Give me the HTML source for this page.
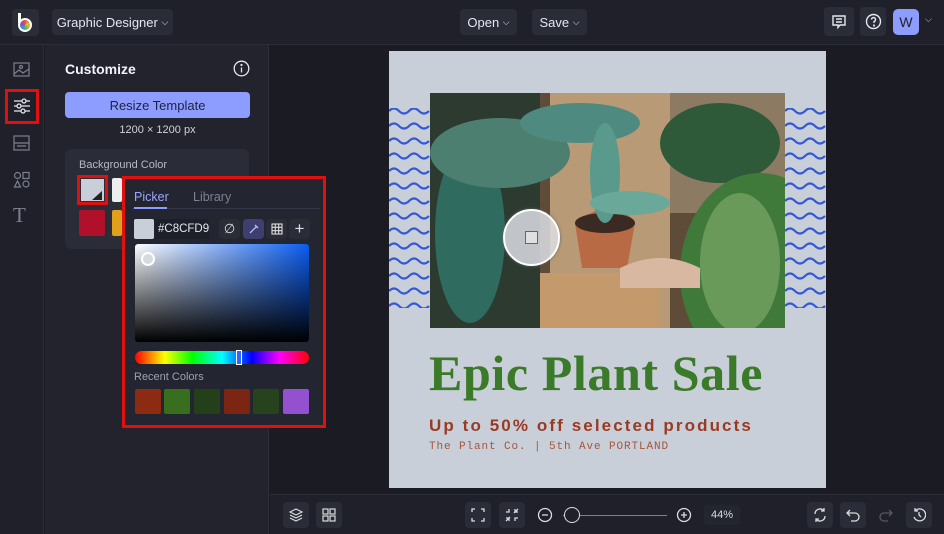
<!DOCTYPE html>
<html><head><meta charset="utf-8"><style>
*{box-sizing:border-box;margin:0;padding:0}
body{width:944px;height:534px;overflow:hidden;background:#1b1c23;font-family:"Liberation Sans",sans-serif;color:#e6e7ee;position:relative}
.abs{position:absolute}
.btn{position:absolute;background:#2a2c37;border-radius:4px;color:#e6e7ee;font-size:13px;display:flex;align-items:center;justify-content:center}
.ib{position:absolute;background:#2a2c37;border-radius:4px;width:26px;height:26px;display:flex;align-items:center;justify-content:center}
</style></head><body>
<div class="abs" style="left:0;top:0;width:944px;height:45px;background:#1f2029;border-bottom:1px solid #2b2d38"></div>
<div class="abs" style="top:9px;left:12px;width:27px;height:27px;background:#2a2c37;border-radius:4px"></div>
<div class="abs" style="left:18px;top:13px;width:3px;height:10px;background:#fff"></div>
<div class="abs" style="left:18px;top:18px;width:14px;height:14px;border-radius:50%;background:conic-gradient(#e94b3c,#f5b82e,#7ac143,#2f9ad8,#8e4fc4,#e94b3c);border:2px solid #fff"></div>
<div class="btn" style="left:52px;top:9px;width:121px;height:26px">Graphic Designer&nbsp; <span style="font-size:9px">⌵</span></div>
<div class="btn" style="left:460px;top:9px;width:57px;height:26px">Open&nbsp; <span style="font-size:9px">⌵</span></div>
<div class="btn" style="left:532px;top:9px;width:55px;height:26px">Save&nbsp; <span style="font-size:9px">⌵</span></div>
<div class="ib" style="left:824px;top:7px;width:30px;height:29px"><svg width="16" height="16" viewBox="0 0 16 16" fill="none" stroke="#e6e7ee" stroke-width="1.4"><path d="M2 2h12v9H9l-2 2.5V11H2z"/><path d="M5 5h6M5 8h6"/></svg></div>
<div class="ib" style="left:860px;top:7px;width:26px;height:29px"><svg width="17" height="17" viewBox="0 0 17 17" fill="none" stroke="#e6e7ee" stroke-width="1.4"><circle cx="8.5" cy="8.5" r="7"/><path d="M6.5 6.5a2 2 0 1 1 2.5 2v1.5"/><circle cx="9" cy="12.5" r=".4"/></svg></div>
<div class="abs" style="left:893px;top:9px;width:26px;height:26px;background:#8c9cff;border-radius:5px;color:#1f2029;font-size:14px;display:flex;align-items:center;justify-content:center">W</div>
<div class="abs" style="left:925px;top:14px;font-size:9px;color:#ccc">⌵</div>
<div class="abs" style="left:0;top:45px;width:44px;height:489px;background:#1f2029;border-right:1px solid #2b2d38"></div>
<svg class="abs" style="left:13px;top:62px" width="18" height="16" fill="none" stroke="#7d8090" stroke-width="1.2"><rect x="1" y="1" width="15" height="13"/><path d="M1 12l5-4 4 3 6-4"/><circle cx="8" cy="5" r="1.5"/></svg>
<div class="abs" style="left:5px;top:89px;width:34px;height:35px;border:3px solid #e01010"></div>
<svg class="abs" style="left:13px;top:97px" width="18" height="18" fill="none" stroke="#e6e7ee" stroke-width="1.3"><path d="M1 4h16M1 9h16M1 14h16"/><circle cx="11" cy="4" r="2" fill="#1f2029"/><circle cx="6" cy="9" r="2" fill="#1f2029"/><circle cx="10" cy="14" r="2" fill="#1f2029"/></svg>
<svg class="abs" style="left:13px;top:135px" width="18" height="16" fill="none" stroke="#7d8090" stroke-width="1.2"><rect x="1" y="1" width="15" height="14"/><path d="M1 8h15M4 11h9"/></svg>
<svg class="abs" style="left:13px;top:171px" width="18" height="18" fill="none" stroke="#7d8090" stroke-width="1.2"><circle cx="4.5" cy="4.5" r="3"/><rect x="10" y="1.5" width="6" height="6"/><path d="M4.5 10l3 6h-6z"/><circle cx="13" cy="13" r="3"/></svg>
<div class="abs" style="left:13px;top:203px;font-family:'Liberation Serif',serif;font-size:21px;color:#7d8090">T</div>
<div class="abs" style="left:45px;top:45px;width:224px;height:489px;background:#22232c;border-right:1px solid #2b2d38"></div>
<div class="abs" style="left:65px;top:61px;font-size:14px;font-weight:bold;color:#f2f3f8">Customize</div>
<svg class="abs" style="left:233px;top:60px" width="17" height="17" fill="none" stroke="#e6e7ee" stroke-width="1.3"><circle cx="8.5" cy="8.5" r="7.3"/><path d="M8.5 7.5v5"/><circle cx="8.5" cy="5" r=".5"/></svg>
<div class="abs" style="left:65px;top:92px;width:185px;height:26px;background:#8c9cff;border-radius:4px;color:#1f2240;font-size:13px;display:flex;align-items:center;justify-content:center">Resize Template</div>
<div class="abs" style="left:65px;top:124px;width:185px;text-align:center;font-size:11px;color:#d0d2dc">1200 × 1200 px</div>
<div class="abs" style="left:65px;top:149px;width:184px;height:100px;background:#2a2c37;border-radius:6px"></div>
<div class="abs" style="left:79px;top:159px;font-size:11px;color:#b8bac6">Background Color</div>
<div class="abs" style="left:77px;top:175px;width:31px;height:30px;border:3px solid #e01010"></div>
<div class="abs" style="left:81px;top:179px;width:23px;height:22px;background:#c8cfd9"></div>
<div class="abs" style="left:92px;top:191px;width:0;height:0;border-left:10px solid transparent;border-bottom:9px solid #222"></div>
<div class="abs" style="left:112px;top:178px;width:10px;height:24px;background:#eee;border-radius:2px"></div>
<div class="abs" style="left:79px;top:210px;width:26px;height:26px;background:#b0102a;border-radius:2px"></div>
<div class="abs" style="left:112px;top:210px;width:10px;height:26px;background:#e0a01a;border-radius:2px"></div>
<div class="abs" style="left:122px;top:176px;width:204px;height:252px;background:#232530;border:3px solid #e01010"></div>
<div class="abs" style="left:134px;top:190px;font-size:12.5px;color:#9ba6ff">Picker</div>
<div class="abs" style="left:193px;top:190px;font-size:12.5px;color:#7d8090">Library</div>
<div class="abs" style="left:132px;top:208px;width:188px;height:1px;background:#34364a"></div>
<div class="abs" style="left:134px;top:207px;width:33px;height:2px;background:#8c9cff"></div>
<div class="abs" style="left:134px;top:219px;width:20px;height:20px;background:#c8cfd9;border-radius:2px"></div>
<div class="abs" style="left:155px;top:219px;width:54px;height:20px;background:#1e2029;font-size:11.5px;color:#e6e7ee;line-height:20px;padding-left:3px">#C8CFD9</div>
<div class="ib" style="left:219px;top:219px;width:21px;height:20px;font-size:13px;color:#ddd">∅</div>
<div class="ib" style="left:243px;top:219px;width:21px;height:20px;background:#3e3f6e"><svg width="12" height="12" fill="none" stroke="#b8c0ff" stroke-width="1.3"><path d="M2 10l6-6M7 2l3 3"/></svg></div>
<div class="ib" style="left:266px;top:219px;width:21px;height:20px"><svg width="12" height="12" fill="none" stroke="#ddd" stroke-width="1.1"><rect x="1" y="1" width="10" height="10"/><path d="M4.3 1v10M7.7 1v10M1 4.3h10M1 7.7h10"/></svg></div>
<div class="ib" style="left:289px;top:219px;width:21px;height:20px;font-size:17px;color:#ddd">+</div>
<div class="abs" style="left:135px;top:244px;width:174px;height:98px;border-radius:3px;background:linear-gradient(to bottom,rgba(0,0,0,0),#000),linear-gradient(to right,#fff,#0a5df0)"></div>
<div class="abs" style="left:141px;top:252px;width:14px;height:14px;border-radius:50%;border:2px solid #fff;background:#d6dbe2"></div>
<div class="abs" style="left:135px;top:351px;width:174px;height:13px;border-radius:7px;background:linear-gradient(to right,#f00,#ff0 17%,#0f0 33%,#0ff 50%,#00f 67%,#f0f 83%,#f00)"></div>
<div class="abs" style="left:236px;top:350px;width:6px;height:15px;border:1.5px solid #fff;background:#36f"></div>
<div class="abs" style="left:134px;top:371px;font-size:11px;color:#9ea1b0">Recent Colors</div>
<div class="abs" style="left:135px;top:389px;width:26px;height:25px;background:#8d2a12;border-radius:2px"></div>
<div class="abs" style="left:164px;top:389px;width:26px;height:25px;background:#386f1f;border-radius:2px"></div>
<div class="abs" style="left:194px;top:389px;width:26px;height:25px;background:#24401a;border-radius:2px"></div>
<div class="abs" style="left:224px;top:389px;width:26px;height:25px;background:#7a2612;border-radius:2px"></div>
<div class="abs" style="left:253px;top:389px;width:26px;height:25px;background:#27431e;border-radius:2px"></div>
<div class="abs" style="left:283px;top:389px;width:26px;height:25px;background:#9350cf;border-radius:2px"></div>
<div class="abs" style="left:389px;top:51px;width:437px;height:437px;background:#c8cfd9"></div>
<svg class="abs" style="left:389px;top:108px" width="41" height="200"><g fill="none" stroke="#3457d6" stroke-width="2.2">
<path d="M0 3q5 -5 10 0t10 0t10 0t10 0M0 18q5 -5 10 0t10 0t10 0t10 0M0 33q5 -5 10 0t10 0t10 0t10 0M0 48q5 -5 10 0t10 0t10 0t10 0M0 63q5 -5 10 0t10 0t10 0t10 0M0 78q5 -5 10 0t10 0t10 0t10 0M0 93q5 -5 10 0t10 0t10 0t10 0M0 108q5 -5 10 0t10 0t10 0t10 0M0 123q5 -5 10 0t10 0t10 0t10 0M0 138q5 -5 10 0t10 0t10 0t10 0M0 153q5 -5 10 0t10 0t10 0t10 0M0 168q5 -5 10 0t10 0t10 0t10 0M0 183q5 -5 10 0t10 0t10 0t10 0M0 198q5 -5 10 0t10 0t10 0t10 0"/></g></svg>
<svg class="abs" style="left:785px;top:108px" width="41" height="200"><g fill="none" stroke="#3457d6" stroke-width="2.2">
<path d="M0 3q5 -5 10 0t10 0t10 0t10 0M0 18q5 -5 10 0t10 0t10 0t10 0M0 33q5 -5 10 0t10 0t10 0t10 0M0 48q5 -5 10 0t10 0t10 0t10 0M0 63q5 -5 10 0t10 0t10 0t10 0M0 78q5 -5 10 0t10 0t10 0t10 0M0 93q5 -5 10 0t10 0t10 0t10 0M0 108q5 -5 10 0t10 0t10 0t10 0M0 123q5 -5 10 0t10 0t10 0t10 0M0 138q5 -5 10 0t10 0t10 0t10 0M0 153q5 -5 10 0t10 0t10 0t10 0M0 168q5 -5 10 0t10 0t10 0t10 0M0 183q5 -5 10 0t10 0t10 0t10 0M0 198q5 -5 10 0t10 0t10 0t10 0"/></g></svg>
<div class="abs" style="left:430px;top:93px;width:355px;height:235px;overflow:hidden;background:#6b5a44">
<svg width="355" height="235">
<rect width="355" height="235" fill="#5e4b38"/>
<rect x="120" y="0" width="120" height="235" fill="#b99a76"/>
<rect x="240" y="0" width="115" height="120" fill="#8d7a62"/>
<rect x="110" y="180" width="120" height="55" fill="#c49a6c"/>
<path d="M0 0h110v235H0z" fill="#2c3a30"/>
<ellipse cx="40" cy="140" rx="35" ry="90" fill="#2f6b5e"/>
<ellipse cx="70" cy="60" rx="70" ry="35" fill="#4d7f70"/>
<ellipse cx="150" cy="30" rx="60" ry="20" fill="#4f8a80"/>
<path d="M145 130q40 -30 60 0l-8 45h-45z" fill="#b86a44"/>
<ellipse cx="175" cy="130" rx="30" ry="10" fill="#3a2a22"/>
<ellipse cx="175" cy="80" rx="15" ry="50" fill="#5a9a8c"/>
<ellipse cx="200" cy="110" rx="40" ry="12" fill="#6aa89a"/>
<ellipse cx="290" cy="50" rx="60" ry="40" fill="#2f5a3a"/>
<ellipse cx="330" cy="180" rx="80" ry="100" fill="#3f7a3a"/>
<ellipse cx="310" cy="170" rx="40" ry="70" fill="#6a9a5a"/>
<path d="M190 175q40 -20 80 0v20h-80z" fill="#d8b8a0"/>
</svg></div>
<div class="abs" style="left:503px;top:209px;width:57px;height:57px;border-radius:50%;background:rgba(220,222,228,.85);border:2px solid #fff;box-shadow:0 0 3px #666"></div>
<div class="abs" style="left:525px;top:231px;width:13px;height:13px;border:1.5px solid #666;background:#e0e0e0"></div>
<div class="abs" style="left:429px;top:344px;font-family:'Liberation Serif',serif;font-size:50px;font-weight:bold;color:#3a7a28;letter-spacing:0.6px;white-space:nowrap">Epic Plant Sale</div>
<div class="abs" style="left:429px;top:416px;font-size:17px;font-weight:bold;color:#9a3a22;letter-spacing:2.1px;white-space:nowrap">Up to 50% off selected products</div>
<div class="abs" style="left:429px;top:441px;font-family:'Liberation Mono',monospace;font-size:11px;color:#a8553a;letter-spacing:0.9px;white-space:nowrap">The Plant Co. | 5th Ave PORTLAND</div>
<div class="abs" style="left:270px;top:494px;width:674px;height:40px;background:#1f2029;border-top:1px solid #2b2d38"></div>
<div class="ib" style="left:283px;top:502px;width:26px;height:26px"><svg width="14" height="14" fill="none" stroke="#ddd" stroke-width="1.2"><path d="M7 1l6 3-6 3-6-3zM1 7l6 3 6-3M1 10l6 3 6-3"/></svg></div>
<div class="ib" style="left:316px;top:502px;width:26px;height:26px"><svg width="14" height="14" fill="none" stroke="#ddd" stroke-width="1.2"><rect x="1" y="1" width="5" height="5"/><rect x="8" y="1" width="5" height="5"/><rect x="1" y="8" width="5" height="5"/><rect x="8" y="8" width="5" height="5"/></svg></div>
<div class="ib" style="left:465px;top:502px;width:26px;height:26px"><svg width="14" height="14" fill="none" stroke="#ddd" stroke-width="1.3"><path d="M1 4V1h3M10 1h3v3M13 10v3h-3M4 13H1v-3"/></svg></div>
<div class="ib" style="left:499px;top:502px;width:26px;height:26px"><svg width="14" height="14" fill="none" stroke="#ddd" stroke-width="1.3"><path d="M1 4h3V1M10 1v3h3M13 10h-3v3M4 13v-3H1M9 5l4-4M5 9l-4 4"/></svg></div>
<svg class="abs" style="left:537px;top:507px" width="16" height="16" fill="none" stroke="#ddd" stroke-width="1.3"><circle cx="8" cy="8" r="6.5"/><path d="M5 8h6"/></svg>
<div class="abs" style="left:563px;top:515px;width:104px;height:1px;background:#7d8090"></div>
<div class="abs" style="left:564px;top:507px;width:16px;height:16px;border-radius:50%;border:1.5px solid #ddd;background:#1f2029"></div>
<svg class="abs" style="left:676px;top:507px" width="16" height="16" fill="none" stroke="#ddd" stroke-width="1.3"><circle cx="8" cy="8" r="6.5"/><path d="M5 8h6M8 5v6"/></svg>
<div class="abs" style="left:704px;top:505px;width:36px;height:20px;background:#23252f;border-radius:3px;font-size:11px;color:#ddd;text-align:center;line-height:20px">44%</div>
<div class="ib" style="left:807px;top:502px;width:26px;height:26px"><svg width="14" height="14" fill="none" stroke="#ddd" stroke-width="1.3"><path d="M2 6a5 5 0 0 1 9-3M12 8a5 5 0 0 1-9 3M11 0v3H8M3 14v-3h3"/></svg></div>
<div class="ib" style="left:840px;top:502px;width:26px;height:26px"><svg width="14" height="14" fill="none" stroke="#ddd" stroke-width="1.3"><path d="M4 2L1 5l3 3M1 5h8a4 4 0 0 1 0 8H5"/></svg></div>
<svg class="abs" style="left:879px;top:508px" width="14" height="14" fill="none" stroke="#555866" stroke-width="1.3"><path d="M10 2l3 3-3 3M13 5H5a4 4 0 0 0 0 8h4"/></svg>
<div class="ib" style="left:906px;top:502px;width:26px;height:26px"><svg width="14" height="14" fill="none" stroke="#ddd" stroke-width="1.3"><path d="M3 3a6 6 0 1 1-1 6M3 0v3h3M7 4v3l2 2"/></svg></div>
</body></html>
